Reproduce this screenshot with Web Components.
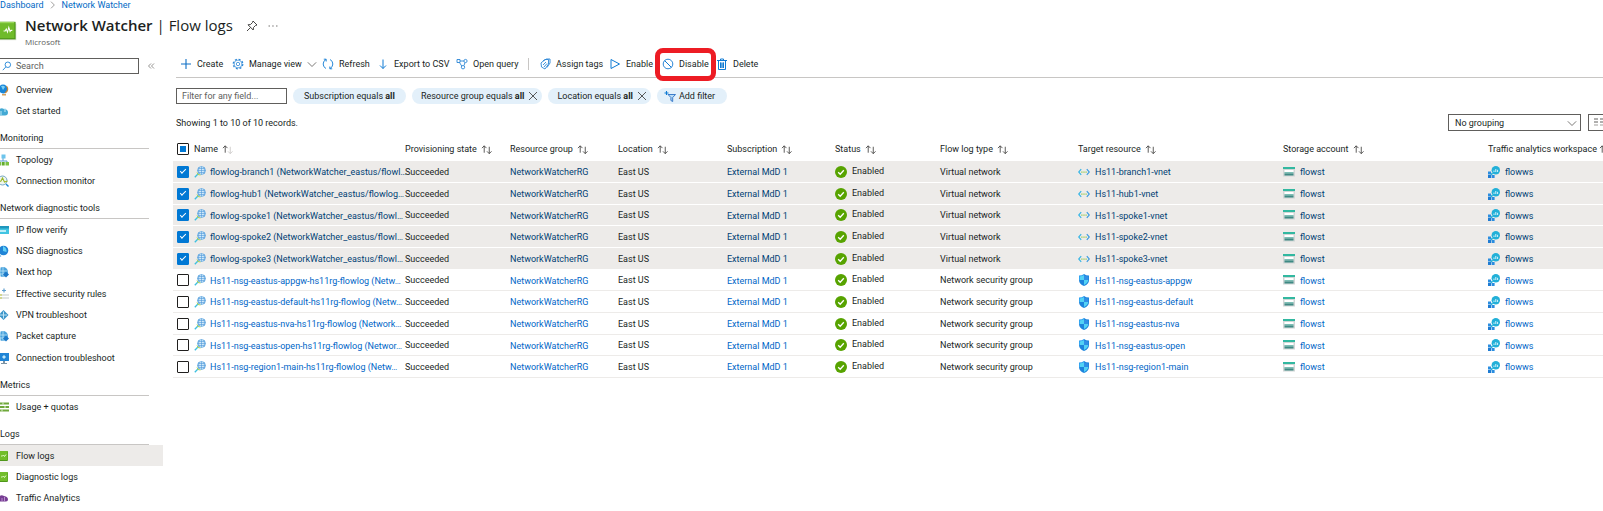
<!DOCTYPE html>
<html lang="en">
<head>
<meta charset="utf-8">
<meta name="viewport" content="width=device-width, initial-scale=1">
<title>Network Watcher | Flow logs</title>
<style>
  body { margin: 0; overflow: hidden; background: #fff; color: #201f1e; font: 9px/12px Roboto, "Open Sans", sans-serif; }
</style>
</head>
<body>
<portal-app></portal-app>

<script>
const define = (name, html, setup) => {
  const template = document.createElement('template');
  template.innerHTML = html;
  customElements.define(name, class extends HTMLElement {
    connectedCallback() {
      if (this.shadowRoot) return;
      this.attachShadow({ mode: 'open' }).append(template.content.cloneNode(true));
      if (setup) setup(this, this.shadowRoot);
    }
  });
};

const line = (d, color = '#0f7bd4', w = 1) => `<path d="${d}" fill="none" stroke="${color}" stroke-width="${w}"/>`;
const book = `<rect x="2" y="1" width="9" height="10" rx="1" fill="#4f971a"/><rect x="2" y="1" width="8.500" height="9" fill="#72bd2b"/><path d="M4 6h1.500l1-1 1 1.500L9 4.500" fill="none" stroke="#e8ffd0" stroke-width=".9"/>`;
const globe = `<circle cx="6" cy="6" r="5" fill="#4ba3dc"/><path d="M1.500 5h9M2 8h8M6 1v10M3.500 2q-1.500 4 0 8" fill="none" stroke="#c9ebfb" stroke-width=".7"/>`;
const ICONS = {
  plus: line('M6 1v10M1 6h10', '#0f6fc5', 1.1),
  gear: `<circle cx="6" cy="6" r="4.800" fill="none" stroke="#2b86d6" stroke-width="1.200" stroke-dasharray="2 1.770"/><circle cx="6" cy="6" r="3.900" fill="none" stroke="#2b86d6" stroke-width=".7"/><circle cx="6" cy="6" r="1.700" fill="none" stroke="#2b86d6" stroke-width=".8"/>`,
  refresh: line('M4 1.500A5 5 0 0 0 4 10.500M1.800 1.200h2.400v2.300M8 10.500A5 5 0 0 0 8 1.500M10.200 10.800H7.800V8.500', '#0f7bd4', .9),
  download: line('M6 1.500v9M3 7.500l3 3 3-3'),
  query: line('M1 1.500h3v3H1zM4 3l4 0M3.500 4.500l2.500 4M9 4.500L8 7.500', '#2b86d6', .9) + `<circle cx="9.500" cy="3" r="1.600" fill="#fff" stroke="#2b86d6" stroke-width=".9"/><circle cx="7" cy="9.200" r="1.700" fill="#fff" stroke="#2b86d6" stroke-width=".9"/>`,
  tags: line('M2 5l4-3.500h3.500V6L6 11 2.500 9zM4 3l3.500-2H11v4L8 9.500M4 7l3-3M5 9l3-3.500', '#2b86d6', .9),
  play: line('M2 1.500l8.500 4.500L2 10.500z'),
  disable: `<circle cx="6" cy="6" r="4.800" fill="none" stroke="#2b86d6"/>` + line('M2.600 2.600l6.800 6.800'),
  trash: line('M1 2.500h10M4.500 2.500V1h3v1.500M2.500 2.500v9h7v-9') + `<path d="M4 4.500h4v5.500H4z" fill="#5ea6df"/>` + line('M4.500 4.500v5.500M7.500 4.500v5.500'),
  filter: line('M0.500 3h4M2.500 1v4', '#0f7bd4', 1.1) + `<path d="M4 4.500h7.500l-2.800 3v4L6.900 10.500v-3z" fill="#b9dcf6" stroke="#2a6fc5" stroke-width=".9"/>`,
  close: line('M2 2l8 8M10 2l-8 8', '#323130', .8),
  chevron: line('M1 4l5 5L11 4', '#605e5c'),
  next: line('M3 1l5 5-5 5', '#605e5c', .9),
  collapse: line('M6 3.500L3.500 6 6 8.500M9 3.500L6.500 6 9 8.500', '#797775', .8),
  search: `<circle cx="7" cy="4.500" r="3.300" fill="none" stroke="#0f7bd4"/>` + line('M4.700 7L1 11'),
  sort: line('M3.500 9.500V2M1 4.500L3.500 2 6 4.500', '#3b3a39', .9) + line('M9 3v7.500M6.500 8L9 10.500 11.500 8', 'var(--down, #3b3a39)', .9),
  pin: line('M7 1l4 4-1.500.500-2 2-.3 2.500L2 4.800l2.500-.3 2-2zM4.500 7.500L1 11', '#323130', .9),
  dots: `<path d="M1.500 5.500H3v1H1.500zM5.200 5.500h1.500v1H5.200zM9 5.500h1.500v1H9z" fill="#797775"/>`,
  columns: line('M0 2h4M0 5h4M6 2h4M6 5h4', '#605e5c') + line('M0 8h4M6 8h4', '#a19f9d'),
  book,
  product: `<path d="M0 1.500h11.500v10H0z" fill="#d2dccb"/><path d="M0 .500h11v10.500H0z" fill="#4d951a"/><rect x="0" y=".500" width="10.200" height="9.800" fill="#6fbb2a"/><path d="M0 1h10" stroke="#a4dd69" stroke-width=".6"/><path d="M2.500 6h1.200l.7-1.200.9 1.900.9-2.900.9 2.500.6-.7h1" fill="none" stroke="#fff" stroke-width=".7"/>`,
  overview: `<circle cx="6" cy="5" r="4.500" fill="#1a86d8"/><path d="M4 2q3-1 4 1L6 6z" fill="#7ad0f5"/><path d="M9.500 2q3 4-1.500 7" stroke="#c98538" stroke-width="1.200" fill="none"/><path d="M5 10h4v1.500H5z" fill="#d4a15e"/>`,
  started: `<path d="M1 10.500a3 3 0 0 1 1-5.500q2-3 5-1 4 0 4 3.500 0 3-3 3z" fill="#43a9d4"/><path d="M8 3v4M4 6v4" stroke="#bfe8f7"/>`,
  topology: line('M6 4v3M2 9V7h8v2', '#5d9cd0') + `<rect x="4.500" y="0.500" width="4" height="4" fill="#6cc4ec"/><rect x="0" y="8" width="4" height="3.500" fill="#7cc242"/><rect x="4.700" y="8" width="3" height="3.500" fill="#63ad2e"/><rect x="8.500" y="8" width="3.500" height="3.500" fill="#7cc242"/>`,
  monitor: `<circle cx="5.500" cy="5.500" r="4.500" fill="#eef6ee" stroke="#74a7c4"/><path d="M1 7l3-1 1.500-3 2 4 3-1" fill="none" stroke="#9bb727" stroke-width="1.100"/><path d="M9 9l2.500 2.500" stroke="#1a86d8" stroke-width="1.400"/>`,
  ipflow: `<rect x="0" y="2" width="12" height="8" fill="#42c4e2"/><path d="M0 2h12v2.500H0z" fill="#1f97bd"/><path d="M3 7h6" stroke="#e6fbff" stroke-width="1.500"/>`,
  nsgdiag: `<circle cx="6.500" cy="5.500" r="4.800" fill="#1f84d6"/><path d="M6 1q4 2 3.500 6L6 6z" fill="#63d0f5"/><path d="M1 9l3 2.500" stroke="#7fb9e6" stroke-width="1.500"/>`,
  hop: globe + `<path d="M6 8.500l3-3 3 3-3 3z" fill="#1d78c8"/>`,
  rules: `<path d="M7 0.500v4M5 2.500h4" stroke="#5f9fd0" stroke-width="1.200"/><path d="M0 7h12M0 10h12" stroke="#c3c9c9" stroke-width="1.200"/><path d="M3 7h2M3 10h2" stroke="#c6c943" stroke-width="1.200"/>`,
  vpn: `<path d="M6.500 1L11.500 6 6.500 11 1.500 6z" fill="#3b95c9"/><path d="M6.500 2.500v7M3 6h7" stroke="#bfe3f5"/>`,
  trouble: `<rect x="0" y="1" width="12" height="8" fill="#1f84d6"/><path d="M6 9h2v2h2v1H4v-1h2z" fill="#7d94a5"/><path d="M7 3l2 2-2 2-2-2z" fill="#bfe8fb"/>`,
  usage: `<path d="M0 2.500h12M0 6h12M0 9.500h12" stroke="#6fa83a" stroke-width="1.800"/><path d="M6 1.500v2M8 5v2M5 8.500v2" stroke="#e4f3d4"/>`,
  cloud: `<path d="M1 9.500a2.500 2.500 0 0 1 1-4.500q2-3 5-1 4 .500 4 3.500 0 2-2 2z" fill="#773d93"/><path d="M5 9V6M7.500 9V5" stroke="#c9a5da" stroke-width=".8"/>`,
  flowlog: `<circle cx="7.500" cy="4.500" r="4" fill="#d3eafa" stroke="#5aa3de" stroke-width=".7"/><path d="M7.500.500v8M3.500 4.500h8M4.300 2.500h6.400M4.300 6.500h6.400" stroke="#4f98da" stroke-width=".6"/><path d="M9.700 1q1.800 3.500 0 7M5.300 1q-1.800 3.500 0 7" fill="none" stroke="#4f98da" stroke-width=".6"/><path d="M4.200 7.800L.8 11.300" stroke="#3fc0df" stroke-width="1.300"/><path d="M3 6.500l1 2 2.500.500" fill="none" stroke="#b3d43f" stroke-width=".9"/>`,
  ok: `<circle cx="6" cy="6" r="6" fill="#57a300"/><path d="M3.200 6.200l2 2 3.600-4" fill="none" stroke="#fff" stroke-width="1.300"/>`,
  vnet: line('M3.200 3.200L.7 6l2.500 2.800', '#35b5e5', 1.200) + line('M8.800 3.200L11.300 6 8.800 8.800', '#3b9be0', 1.200) + `<path d="M3.300 5.500h1.200v1.200H3.300zM5.400 5.500h1.200v1.200H5.400zM7.500 5.500h1.200v1.200H7.500z" fill="#8fc749"/>`,
  shield: `<path d="M6 0Q8 1.500 11 1.500V6q0 4-5 6Z" fill="#1d84dc"/><path d="M6 0Q4 1.500 1 1.500V6h5z" fill="#2b9cf0"/><path d="M1 6q0 4 5 6V6z" fill="#1d84dc"/><path d="M6 1.200q2 1 4.200 1.200V6H6z" fill="#2f8fe6"/><path d="M6 1.200Q4 2.200 1.800 2.400V6H6z" fill="#53d2f5"/><path d="M6 6h4.200Q10 9.200 6 11z" fill="#53d2f5"/>`,
  storage: `<rect x="0" y="1" width="12" height="2" fill="#32b8a0"/><rect x="0" y="3" width="12" height="7.500" fill="#d2d6d6"/><rect x="1.500" y="4" width="9" height="2" fill="#fff"/><rect x="1.500" y="6" width="9" height="1.500" fill="#7cc0b6"/><rect x="1.500" y="7.500" width="9" height="2" fill="#3e8a84"/>`,
  workspace: `<rect x="0" y="5.500" width="3" height="3" fill="#2a8de0"/><rect x="0" y="9" width="3" height="3" fill="#1f7bd2"/><rect x="3.600" y="9" width="3" height="3" fill="#2a8de0"/><circle cx="7.800" cy="4.200" r="4.200" fill="#22b0d8"/><path d="M4.500 7L3 9" stroke="#22b0d8" stroke-width="1.500"/><path d="M6 6V4.500M7.800 6V3M9.600 6V3.800" stroke="#e9faff" stroke-width=".9"/>`
};

define('az-icon', `<style>
  :host { display: inline-flex; flex: none; width: 12px; height: 12px; }
  svg { width: 100%; height: 100%; display: block; }
</style><svg viewBox="0 0 12 12" aria-hidden="true"></svg>`, (host, root) => {
  const svg = root.querySelector('svg');
  svg.innerHTML = ICONS[host.getAttribute('name')] || '';
  if (host.hasAttribute('fill')) svg.setAttribute('preserveAspectRatio', 'none');
});

define('bread-crumb', `<style>
  :host { display: block; }
  nav { display: flex; align-items: center; height: 10px; gap: 5px; line-height: 10px; }
  a { color: #0069c5; text-decoration: none; }
  az-icon { width: 8px; height: 8px; }
</style>
<nav aria-label="Breadcrumb"><a href="#home">Dashboard</a><az-icon name="next"></az-icon><a href="#watcher">Network Watcher</a></nav>`);

define('blade-header', `<style>
  :host { display: flex; align-items: flex-start; padding-top: 5px; }
  .logo { width: 17px; height: 20px; margin: 6px 8px 0 0; }
  h1 { margin: 0; font: 15px/20px "Open Sans", sans-serif; }
  h1 b { font-weight: 600; }
  p { margin: 0; font: 8px/13px "Open Sans", sans-serif; color: #605e5c; }
  .tools { display: flex; gap: 9px; margin: 5px 0 0 13px; }
  button { all: unset; display: flex; cursor: pointer; }
</style>
<az-icon class="logo" name="product" fill></az-icon>
<div><h1><b>Network Watcher</b> | Flow logs</h1><p>Microsoft</p></div>
<div class="tools"><button aria-label="Pin"><az-icon name="pin"></az-icon></button><button aria-label="More"><az-icon name="dots"></az-icon></button></div>`);

define('nav-search', `<style>
  :host { display: flex; align-items: center; gap: 6px; }
  label { flex: none; width: 138px; height: 14px; display: flex; align-items: center; border: 1px solid #605e5c; border-left: 0; }
  az-icon { width: 10px; height: 10px; margin: 0 4px 0 2px; }
  input { all: unset; flex: 1; min-width: 0; font: inherit; line-height: 14px; }
  input::placeholder { color: #605e5c; opacity: 1; }
  button { all: unset; display: flex; cursor: pointer; }
  button az-icon { margin: 0; width: 12px; height: 12px; }
</style>
<label><az-icon name="search"></az-icon><input type="search" aria-label="Search" placeholder="Search"></label>
<button aria-label="Collapse menu"><az-icon name="collapse"></az-icon></button>`);

define('nav-group', `<style>
  :host { display: block; }
  h2 { margin: 0 14px 0 0; padding: 10px 0 2px; border-bottom: 1px solid #c8c6c4; font: inherit; line-height: 15px; }
  h2[hidden] { display: none; }
  ::slotted(nav-item:nth-of-type(3n)) { height: 22px; }
</style><h2></h2><slot></slot>`, (host, root) => {
  const h = root.querySelector('h2');
  h.textContent = host.getAttribute('heading') || '';
  h.hidden = !h.textContent;
});

define('nav-item', `<style>
  :host { display: block; height: 21px; }
  :host([current]) { background: #edebe9; }
  a { display: flex; align-items: center; height: 100%; gap: 7px; color: inherit; text-decoration: none; }
  az-icon { margin-left: -3px; }
</style><a href="#item"><az-icon></az-icon><slot></slot></a>`, (host, root) => {
  const icon = document.createElement('az-icon');
  icon.setAttribute('name', host.getAttribute('icon'));
  root.querySelector('az-icon').replaceWith(icon);
});

define('side-nav', `<style>
  :host { display: block; width: 163px; flex: none; padding-top: 10px; }
  nav { padding-top: 5px; }
</style>
<nav-search></nav-search>
<nav aria-label="Network Watcher">
  <nav-group><nav-item icon="overview">Overview</nav-item><nav-item icon="started">Get started</nav-item></nav-group>
  <nav-group heading="Monitoring"><nav-item icon="topology">Topology</nav-item><nav-item icon="monitor">Connection monitor</nav-item></nav-group>
  <nav-group heading="Network diagnostic tools"><nav-item icon="ipflow">IP flow verify</nav-item><nav-item icon="nsgdiag">NSG diagnostics</nav-item><nav-item icon="hop">Next hop</nav-item><nav-item icon="rules">Effective security rules</nav-item><nav-item icon="vpn">VPN troubleshoot</nav-item><nav-item icon="hop">Packet capture</nav-item><nav-item icon="trouble">Connection troubleshoot</nav-item></nav-group>
  <nav-group heading="Metrics"><nav-item icon="usage">Usage + quotas</nav-item></nav-group>
  <nav-group heading="Logs"><nav-item icon="book" current>Flow logs</nav-item><nav-item icon="book">Diagnostic logs</nav-item><nav-item icon="cloud">Traffic Analytics</nav-item></nav-group>
</nav>`);

define('command-button', `<style>
  :host { display: flex; position: relative; }
  button { all: unset; display: flex; align-items: center; gap: 5px; cursor: pointer; white-space: nowrap; }
  .more { width: 10px; height: 10px; }
  :host([marked])::after { content: ""; position: absolute; inset: -10px 0 -11px -7px; border: 5px solid #ed1c24; border-radius: 8px; pointer-events: none; }
</style><button><slot></slot></button>`, (host, root) => {
  const button = root.querySelector('button');
  const icon = document.createElement('az-icon');
  icon.setAttribute('name', host.getAttribute('icon'));
  button.prepend(icon);
  if (host.hasAttribute('menu')) {
    const more = document.createElement('az-icon');
    more.className = 'more';
    more.setAttribute('name', 'chevron');
    button.append(more);
  }
});

define('command-bar', `<style>
  :host { display: grid; grid-template-columns: 52px 90px 55px 79px 72px 11px 70px 53px 54px auto; align-items: center; height: 22px; padding: 0 0 2px 4px; border-bottom: 1px solid #c8c6c4; }
  i { width: 1px; height: 12px; background: #c8c6c4; }
</style>
<command-button icon="plus">Create</command-button>
<command-button icon="gear" menu>Manage view</command-button>
<command-button icon="refresh">Refresh</command-button>
<command-button icon="download">Export to CSV</command-button>
<command-button icon="query">Open query</command-button>
<i></i>
<command-button icon="tags">Assign tags</command-button>
<command-button icon="play">Enable</command-button>
<command-button icon="disable" marked>Disable</command-button>
<command-button icon="trash">Delete</command-button>`);

define('filter-pill', `<style>
  :host { display: flex; }
  button { all: unset; display: flex; align-items: center; gap: 3px; height: 16px; padding: 0 11px; border-radius: 8px; background: #e3f0fa; cursor: pointer; white-space: nowrap; }
  :host([closable]) button { padding: 0 3px 0 9px; }
  :host([icon]) button { padding: 0 12px 0 7px; }
</style><button><slot></slot></button>`, (host, root) => {
  const button = root.querySelector('button');
  const add = (name, where) => {
    const icon = document.createElement('az-icon');
    icon.setAttribute('name', name);
    button[where](icon);
  };
  if (host.hasAttribute('closable')) add('close', 'append');
  if (host.hasAttribute('icon')) add(host.getAttribute('icon'), 'prepend');
});

define('filter-bar', `<style>
  :host { display: flex; align-items: center; gap: 6px; margin-top: 10px; }
  input { box-sizing: border-box; width: 111px; height: 16px; margin: 0; padding: 0 5px; border: 1px solid #605e5c; border-radius: 0; font: inherit; }
  input::placeholder { color: #605e5c; opacity: 1; }
  b { font-weight: 700; }
</style>
<input type="text" aria-label="Filter for any field" placeholder="Filter for any field...">
<filter-pill><span>Subscription equals <b>all</b></span></filter-pill>
<filter-pill closable><span>Resource group equals <b>all</b></span></filter-pill>
<filter-pill closable><span>Location equals <b>all</b></span></filter-pill>
<filter-pill icon="filter">Add filter</filter-pill>`);

define('record-bar', `<style>
  :host { display: flex; align-items: center; margin-top: 10px; }
  p { margin: 0; flex: 1; }
  .pick { display: grid; width: 133px; align-items: center; margin-right: 7px; }
  select, .pick az-icon { grid-area: 1 / 1; }
  select { appearance: none; box-sizing: border-box; width: 100%; height: 17px; margin: 0; padding: 0 6px; border: 1px solid #605e5c; border-radius: 0; background: #fff; color: inherit; font: inherit; }
  .pick az-icon { width: 10px; height: 10px; justify-self: end; margin-right: 4px; pointer-events: none; z-index: 1; }
  button { all: unset; box-sizing: border-box; display: flex; align-items: center; width: 26px; height: 17px; margin-right: -11px; padding-left: 5px; border: 1px solid #605e5c; }
</style>
<p>Showing 1 to 10 of 10 records.</p>
<div class="pick"><select aria-label="Grouping"><option>No grouping</option></select><az-icon name="chevron"></az-icon></div>
<button aria-label="Choose view"><az-icon name="columns"></az-icon></button>`);

const rows = [
  ['flowlog-branch1 (NetworkWatcher_eastus/flowl…', 'Hs11-branch1-vnet', true],
  ['flowlog-hub1 (NetworkWatcher_eastus/flowlog…', 'Hs11-hub1-vnet', true],
  ['flowlog-spoke1 (NetworkWatcher_eastus/flowl…', 'Hs11-spoke1-vnet', true],
  ['flowlog-spoke2 (NetworkWatcher_eastus/flowl…', 'Hs11-spoke2-vnet', true],
  ['flowlog-spoke3 (NetworkWatcher_eastus/flowl…', 'Hs11-spoke3-vnet', true],
  ['Hs11-nsg-eastus-appgw-hs11rg-flowlog (Netw…', 'Hs11-nsg-eastus-appgw', false],
  ['Hs11-nsg-eastus-default-hs11rg-flowlog (Netw…', 'Hs11-nsg-eastus-default', false],
  ['Hs11-nsg-eastus-nva-hs11rg-flowlog (Network…', 'Hs11-nsg-eastus-nva', false],
  ['Hs11-nsg-eastus-open-hs11rg-flowlog (Networ…', 'Hs11-nsg-eastus-open', false],
  ['Hs11-nsg-region1-main-hs11rg-flowlog (Netw…', 'Hs11-nsg-region1-main', false]
];
const headings = ['Name', 'Provisioning state', 'Resource group', 'Location', 'Subscription', 'Status', 'Flow log type', 'Target resource', 'Storage account', 'Traffic analytics workspace'];
const link = (text, icon) => `<div class="cell">${icon ? `<az-icon name="${icon}"></az-icon>` : ''}<a href="#open">${text}</a></div>`;

define('flow-table', `<style>
  :host { display: block; margin: 0 -18px 0 -3px; }
  table { width: 100%; table-layout: fixed; border-collapse: collapse; }
  col.check { width: 18px; } col.name { width: 211px; } col.small { width: 105px; } col.mid { width: 108px; } col.place { width: 109px; }
  col.type { width: 138px; } col.wide { width: 205px; }
  th, td { padding: 0 0 0 3px; text-align: left; font-weight: 400; white-space: nowrap; }
  th { height: 24px; padding-top: 6px; }
  td { height: 21px; border-bottom: 1px solid #edebe9; }
  tr:nth-child(3n) td { height: 20px; }
  tr.on td { background: #edebe9; border-bottom-color: #fff; }
  .cell { display: flex; align-items: center; gap: 5px; }
  td:nth-child(2) .cell { gap: 4px; }
  .status span { padding-bottom: 2px; }
  button { all: unset; display: flex; align-items: center; gap: 4px; cursor: pointer; }
  button az-icon { width: 11px; height: 11px; }
  th:nth-child(2) button { --down: #c8c6c4; }
  th:last-child button { gap: 2px; }
  a { color: #0066c7; text-decoration: none; padding-top: 1px; }
  .on a { color: #003e73; }
  input { appearance: none; display: grid; place-items: center; box-sizing: border-box; width: 12px; height: 12px; margin: 0 0 0 1px; border: 1px solid #201f1e; border-radius: 1px; background: #fff; }
  input:checked { background: #0078d4; border-color: #0078d4; }
  input:checked::before { content: ""; width: 6px; height: 3px; margin-bottom: 2px; box-sizing: border-box; border: solid #fff; border-width: 0 0 1px 1px; transform: rotate(-45deg); }
  input:indeterminate::before { content: ""; width: 6px; height: 6px; background: #0078d4; }
</style>
<table>
  <colgroup><col class="check"><col class="name"><col class="small"><col class="mid"><col class="place"><col class="mid"><col class="small"><col class="type"><col class="wide"><col class="wide"><col></colgroup>
  <thead><tr><th><input type="checkbox" aria-label="Select all"></th>${headings.map(h => `<th scope="col"><button>${h}<az-icon name="sort"></az-icon></button></th>`).join('')}</tr></thead>
  <tbody>${rows.map(([name, target, on]) => `<tr class="${on ? 'on' : ''}">
    <td><input type="checkbox" aria-label="Select ${target}"${on ? ' checked' : ''}></td>
    <td>${link(name, 'flowlog')}</td><td>Succeeded</td><td>${link('NetworkWatcherRG')}</td><td>East US</td><td>${link('External MdD 1')}</td>
    <td><div class="cell status"><az-icon name="ok"></az-icon><span>Enabled</span></div></td>
    <td>${on ? 'Virtual network' : 'Network security group'}</td>
    <td>${link(target, on ? 'vnet' : 'shield')}</td><td>${link('flowst', 'storage')}</td><td>${link('flowws', 'workspace')}</td></tr>`).join('')}</tbody>
</table>`, (host, root) => { root.querySelector('thead input').indeterminate = true; });

define('portal-app', `<style>
  :host { display: block; overflow: hidden; }
  .body { display: flex; }
  main { flex: 1; min-width: 0; padding: 5px 0 0 13px; }
</style>
<bread-crumb></bread-crumb>
<blade-header></blade-header>
<div class="body">
  <side-nav></side-nav>
  <main><command-bar></command-bar><filter-bar></filter-bar><record-bar></record-bar><flow-table></flow-table></main>
</div>`);
</script>
</body>
</html>
